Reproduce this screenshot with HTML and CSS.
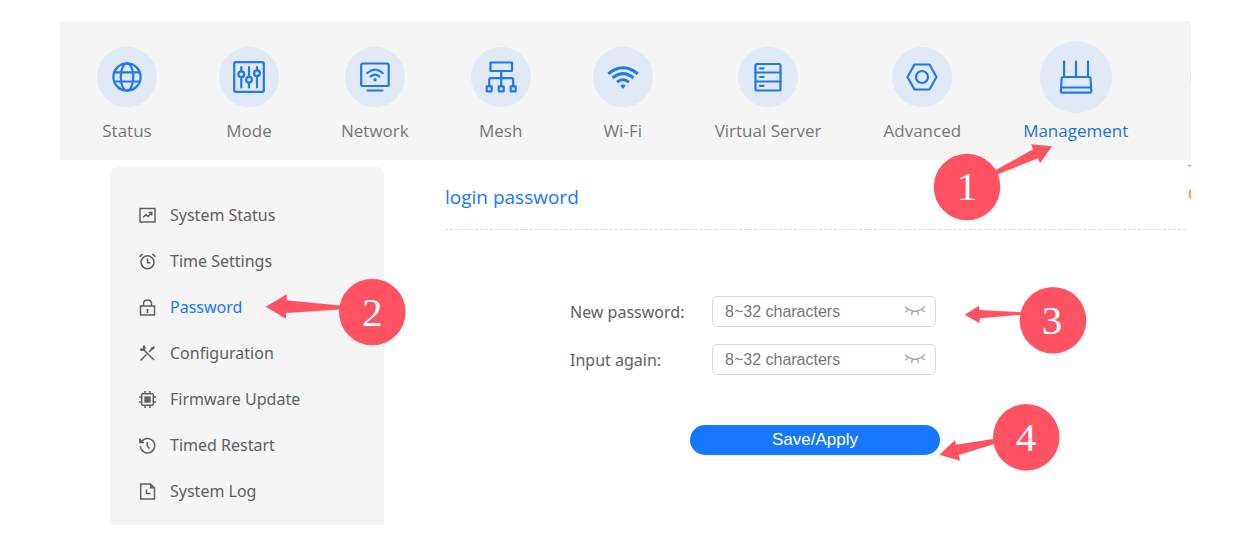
FILE: index.html
```html
<!DOCTYPE html>
<html lang="en">
<head>
<meta charset="utf-8">
<meta name="viewport" content="width=device-width, initial-scale=1">
<title>Router management</title>
<link rel="stylesheet" href="styles.css">
</head>
<body>
<div class="frame">
  <nav class="topnav" aria-label="Main">
    <ul class="topnav-list">
      <li><a class="tab" href="#status"><span class="tab-slot"><span class="tab-circle"><svg class="tab-icon" viewBox="0 0 36 36"><circle cx="18" cy="18" r="13.6"/><ellipse cx="18" cy="18" rx="6.3" ry="13.6"/><path d="M5.2 13.3h25.600M5.200 22.500h25.600"/></svg></span></span><span class="tab-label">Status</span></a></li>
      <li><a class="tab" href="#mode"><span class="tab-slot"><span class="tab-circle"><svg class="tab-icon" viewBox="0 0 36 36"><rect x="3.200" y="3.200" width="29.600" height="29.600" rx="1.500"/><path d="M10.300 8v4M10.300 18.500v10M18 8v9.500M18 24v4.500M26 8v3M26 17v11.500"/><circle cx="10.300" cy="15.200" r="2.900"/><circle cx="18" cy="20.800" r="2.900"/><circle cx="26" cy="14.200" r="2.900"/></svg></span></span><span class="tab-label">Mode</span></a></li>
      <li><a class="tab" href="#network"><span class="tab-slot"><span class="tab-circle"><svg class="tab-icon" viewBox="0 0 36 36"><rect x="4.200" y="4.500" width="27.500" height="22.500" rx="1.500"/><path d="M10.500 31.500h15"/><path d="M10.300 14q7.700-6.600 15.400 0M13.600 17.500q4.400-3.700 8.800 0"/><circle class="solid" cx="18" cy="20.800" r="1.700"/></svg></span></span><span class="tab-label">Network</span></a></li>
      <li><a class="tab" href="#mesh"><span class="tab-slot"><span class="tab-circle"><svg class="tab-icon" viewBox="0 0 36 36"><path d="M7.500 3.500h21.500v8.500h-21.500zM18.200 12v15M6.200 27v-6.200q0-1.600 1.600-1.600h20.800q1.600 0 1.600 1.600v6.200M3.700 27.300h5v5h-5zM15.700 27.300h5v5h-5zM27.700 27.300h5v5h-5z"/></svg></span></span><span class="tab-label">Mesh</span></a></li>
      <li><a class="tab" href="#wifi"><span class="tab-slot"><span class="tab-circle"><svg class="tab-icon" viewBox="0 0 36 36"><path class="heavy" d="M3.300 14.800q14.700-12 29.400 0M7.500 19q10.500-8.800 21 0M12 23.200q6-5 12 0"/><path class="solid" d="M15.300 26.600q2.700-2 5.400 0l-2.700 3.300z"/></svg></span></span><span class="tab-label">Wi-Fi</span></a></li>
      <li><a class="tab" href="#virtual-server"><span class="tab-slot"><span class="tab-circle"><svg class="tab-icon" viewBox="0 0 36 36"><rect x="5.500" y="5" width="25" height="26.500" rx="1.500"/><path d="M5.500 13.500h25M5.500 22.500h25M10 9.300h3.500M10 18h3.500M10 26.800h3.500"/></svg></span></span><span class="tab-label">Virtual Server</span></a></li>
      <li><a class="tab" href="#advanced"><span class="tab-slot"><span class="tab-circle"><svg class="tab-icon" viewBox="0 0 36 36"><path d="M10.500 5.500h15l7 12.500-7 12.500h-15l-7-12.500z"/><circle cx="18" cy="18" r="6"/></svg></span></span><span class="tab-label">Advanced</span></a></li>
      <li class="callout-anchor"><a class="tab tab-active" href="#management" aria-current="page"><span class="tab-slot"><span class="tab-circle"><svg class="tab-icon" viewBox="0 0 36 36"><path d="M6.100 2.700v15M18 2.700v15M30 2.700v15M5 18h26.200q1.200 0 1.300 1.200l.8 13.200q0 1.300-1.300 1.300h-27.800q-1.300 0-1.300-1.300l.8-13.200q.1-1.200 1.300-1.200zM3.500 28.500h29.500"/></svg></span></span><span class="tab-label">Management</span></a>
        <svg class="callout callout-management" width="122" height="80" viewBox="0 0 122 80" role="img" aria-label="Step 1"><path d="M63 29L102 7.300L100 2.300L121 4.300L109 21.300L107 16.300L64 33.500z"/><circle cx="36" cy="45" r="33.300"/><text x="36" y="58">1</text></svg>
      </li>
      <li aria-hidden="true"><span class="tab-slot"><span class="tab-circle"></span></span></li>
    </ul>
  </nav>

  <div class="body">
    <nav class="sidebar" aria-label="Management">
      <ul class="side-list">
        <li><a class="side-link" href="#system-status"><svg class="side-icon" viewBox="0 0 17 17"><rect x="1" y="1.500" width="15" height="13.500"/><path d="M4 10.500l3-2.700 2 1.700 3.500-3.500M9.500 5.500h3.300v3"/></svg>System Status</a></li>
        <li><a class="side-link" href="#time-settings"><svg class="side-icon" viewBox="0 0 17 17"><circle cx="8.500" cy="9.300" r="6.500"/><path d="M8.500 5.500v4.200h3M.8 4q.7-2 3-2.800M16.200 4q-.7-2-3-2.800"/></svg>Time Settings</a></li>
        <li class="callout-anchor"><a class="side-link side-link-active" href="#password" aria-current="page"><svg class="side-icon" viewBox="0 0 17 17"><rect x="1.500" y="7" width="14" height="9"/><path d="M4.500 7v-2.300q0-3.700 4-3.700t4 3.700v2.300M8.500 10v4M7.500 10.700h2"/></svg>Password</a>
          <svg class="callout callout-password" width="142" height="70" viewBox="0 0 142 70" role="img" aria-label="Step 2"><path d="M75 27.500L21.700 22.300V16.300L.7 28.700L21 40.700V35L75 31.500z"/><circle cx="107.300" cy="34" r="33.300"/><text x="107.300" y="48">2</text></svg>
        </li>
        <li><a class="side-link" href="#configuration"><svg class="side-icon" viewBox="0 0 17 17"><path d="M4.500 4.500l10.500 10.500M1.500 15.500l6-6M10 7l3-3"/><path class="tool" d="M12 4.500l3.300-2.500M1.200 4q2.500 1.700 3.700 0t-.7-3"/></svg>Configuration</a></li>
        <li><a class="side-link" href="#firmware"><svg class="side-icon" viewBox="0 0 17 17"><rect x="2.700" y="2.700" width="11.600" height="11.600" rx="1"/><path d="M6 0v2.500M11 0v2.500M6 14.500v2.500M11 14.500v2.500M0 6h2.500M0 11h2.500M14.500 6h2.500M14.500 11h2.500"/><path class="side-fill" d="M5.300 5.300h6.400v6.400h-6.400z"/></svg>Firmware Update</a></li>
        <li><a class="side-link" href="#restart"><svg class="side-icon" viewBox="0 0 17 17"><path d="M2.600 4.700a7.200 7.200 0 1 1-1.200 4.500M8.300 5v4l2.200 2.800M1 1.500v4h4"/><path class="side-fill" d="M.5 1.500v4.300h4.500z"/></svg>Timed Restart</a></li>
        <li><a class="side-link" href="#log"><svg class="side-icon" viewBox="0 0 17 17"><path d="M1.700 1h9.800l4 4v11h-13.800zM7.500 6.500v4h4"/><path class="side-fill" d="M11 .8v4.700h4.700z"/></svg>System Log</a></li>
      </ul>
    </nav>

    <main class="content">
      <h1 class="title">login password</h1>
      <form class="form">
        <div class="row">
          <label for="new-password">New password:</label>
          <div class="field callout-anchor">
            <input id="new-password" type="password" placeholder="8~32 characters">
            <button class="eye" type="button" aria-label="Show password"><svg viewBox="0 0 22 12"><path d="M1 1.500q10 9.500 20 0M4.300 4.500l-3 2.500M8.500 6.500l-1 3.500M13.500 6.500l1 3.500M17.700 4.500l3 2.500"/></svg></button>
            <svg class="callout callout-field" width="124" height="70" viewBox="0 0 124 70" role="img" aria-label="Step 3"><path d="M.7 28.700L15 19.700L15.300 24L59 26.300V28.700L16 32.300L15.300 37z"/><circle cx="89" cy="34.300" r="33.300"/><text x="88" y="48">3</text></svg>
          </div>
        </div>
        <div class="row">
          <label for="repeat-password">Input again:</label>
          <div class="field">
            <input id="repeat-password" type="password" placeholder="8~32 characters">
            <button class="eye" type="button" aria-label="Show password"><svg viewBox="0 0 22 12"><path d="M1 1.500q10 9.500 20 0M4.300 4.500l-3 2.500M8.500 6.500l-1 3.500M13.500 6.500l1 3.500M17.700 4.500l3 2.500"/></svg></button>
          </div>
        </div>
        <div class="actions callout-anchor">
          <button class="save" type="submit">Save/Apply</button>
          <svg class="callout callout-save" width="124" height="70" viewBox="0 0 124 70" role="img" aria-label="Step 4"><path d="M1.300 51.700L17 37L18 41.700L58 35.500V40.500L20.700 52L22 57.700z"/><circle cx="88.300" cy="34.300" r="33.300"/><text x="88" y="48">4</text></svg>
        </div>
      </form>
    </main>

    <aside class="notice">T<br>C</aside>
  </div>
</div>
</body>
</html>
```
FILE: styles.css
```css
* { box-sizing: border-box; }

body {
  margin: 0;
  background: #fff;
  color: #606060;
  font: 16px/24px "Noto Sans", "Open Sans", sans-serif;
}

ul { margin: 0; padding: 0; list-style: none; }
a { color: inherit; text-decoration: none; }

.frame { margin: 21px 60px 16px; overflow: hidden; }

/* Top navigation */
.topnav { padding: 20px 0 17px 37px; background: #f5f5f5; }
.topnav-list { display: flex; gap: 62px; }
.topnav-list > li { flex: none; }
.tab {
  display: block;
  color: #777;
  font-family: "Open Sans", "Noto Sans", sans-serif;
  font-size: 17px;
  text-align: center;
}
.tab-slot {
  display: flex;
  align-items: center;
  justify-content: center;
  height: 72px;
  margin-bottom: 6px;
}
.tab-circle {
  display: flex;
  align-items: center;
  justify-content: center;
  width: 60px;
  height: 60px;
  border-radius: 50%;
  background: #e1e9f5;
}
.tab-icon {
  width: 36px;
  height: 36px;
  fill: none;
  stroke: #2079ea;
  stroke-width: 2.2;
  stroke-linecap: round;
  stroke-linejoin: round;
}
.tab-icon .heavy { stroke-width: 3; stroke-linecap: butt; }
.tab-icon .solid { fill: #2079ea; stroke: none; }
.tab-label { display: block; white-space: nowrap; }
.tab-active { color: #1a70ea; }
.tab-active .tab-circle { width: 72px; height: 72px; }

/* Body columns */
.body { display: flex; padding-left: 50px; }
.sidebar {
  flex: none;
  width: 274px;
  margin-top: 7px;
  padding: 25px 0 11px 29px;
  border-radius: 8px 8px 0 0;
  background: #f5f5f5;
}
.side-link { display: flex; align-items: center; gap: 14px; height: 46px; }
.side-link-active { color: #1677ff; }
.side-icon {
  width: 17px;
  height: 17px;
  fill: none;
  stroke: #606060;
  stroke-width: 1.5;
}
.side-link-active .side-icon { stroke: #606060; }
.side-icon .side-fill { fill: #606060; stroke: none; }
.side-icon .tool { stroke-width: 2.5; }

.content { flex: 1; min-width: 0; margin: 7px 2px 0 61px; }
.title {
  margin: 0;
  padding: 15px 0 17px;
  border-bottom: 1px dashed #d9d9d9;
  color: #1677ff;
  font-family: "Open Sans", "Noto Sans", sans-serif;
  font-size: 19px;
  font-weight: 400;
  line-height: 30px;
}
.notice {
  flex: none;
  width: 3px;
  overflow: hidden;
  color: #ff8c1a;
  line-height: 23px;
}

/* Password form */
.form { padding: 66px 0 0 125px; }
.row { display: flex; align-items: center; margin-bottom: 17px; }
.row label { flex: none; width: 142px; }
.field { position: relative; width: 224px; }
.field input {
  display: block;
  width: 100%;
  height: 31px;
  padding: 0 40px 0 12px;
  border: 1px solid #d9d9d9;
  border-radius: 6px;
  background: #fff;
  color: #606060;
  font: 16px "Liberation Sans", Arial, sans-serif;
}
.field input::placeholder { color: #777; }
.eye {
  position: absolute;
  top: 0;
  right: 10px;
  height: 29px;
  padding: 0;
  border: 0;
  background: none;
}
.eye svg {
  display: block;
  width: 22px;
  height: 12px;
  fill: none;
  stroke: #aaa;
  stroke-width: 1.5;
}
.actions { width: 250px; margin: 50px 0 0 120px; }
.save {
  display: block;
  width: 100%;
  height: 30px;
  border: 0;
  border-radius: 15px;
  background: #1677ff;
  color: #fff;
  font: 17px "Liberation Sans", Arial, sans-serif;
}

/* Numbered step markers laid over the page */
.callout-anchor { position: relative; }
.callout { position: absolute; z-index: 2; fill: #ff5263; pointer-events: none; }
.callout text {
  fill: #fff;
  font: 41px "Liberation Serif", "Times New Roman", serif;
  text-anchor: middle;
}
.callout-management { top: 101px; left: -92px; }
.callout-password { top: -6px; left: 126px; }
.callout-field { top: -10px; left: 252px; }
.callout-save { top: -22px; left: 248px; }
```
